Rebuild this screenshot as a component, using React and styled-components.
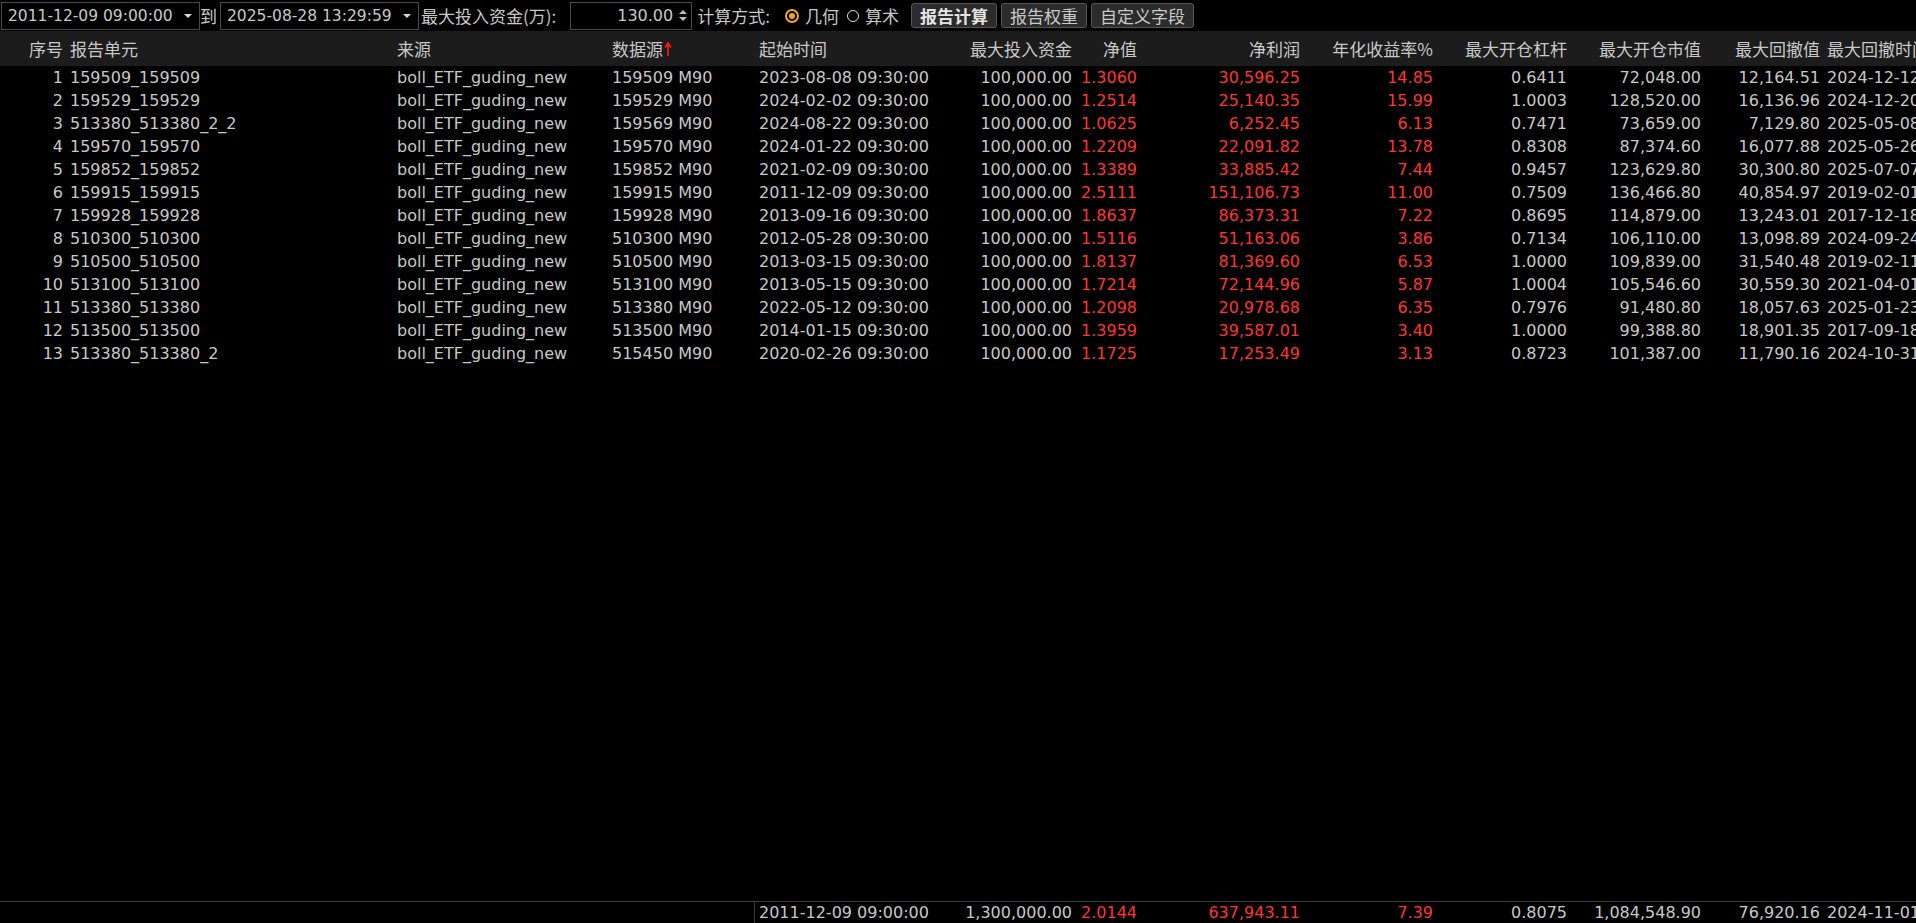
import React from "react";
import styled, { createGlobalStyle } from "styled-components";

const GlobalStyle = createGlobalStyle`
  html, body {
    margin: 0;
    padding: 0;
    background: #000;
    overflow: hidden;
  }
`;

const CJK = `"Noto Sans CJK SC", "Noto Sans", sans-serif`;
const LATIN = `"DejaVu Sans", "Noto Sans CJK SC", sans-serif`;
const TEXT = "#c8c8c8";
const RED = "#ff3434";
const LINE = "#3c3c3c";

// column widths in px, shared by header, rows and footer
const COLS = [66, 327, 215, 147, 185, 135, 65, 163, 133, 134, 134, 119, 170];
const GRID = COLS.map((w) => `${w}px`).join(" ");

const columns = [
  { title: "序号", align: "right" },
  { title: "报告单元", align: "left" },
  { title: "来源", align: "left" },
  { title: "数据源", align: "left", sorted: true },
  { title: "起始时间", align: "left" },
  { title: "最大投入资金", align: "right" },
  { title: "净值", align: "right", red: true },
  { title: "净利润", align: "right", red: true },
  { title: "年化收益率%", align: "right", red: true },
  { title: "最大开仓杠杆", align: "right" },
  { title: "最大开仓市值", align: "right" },
  { title: "最大回撤值", align: "right" },
  { title: "最大回撤时间", align: "left" },
];

const SRC = "boll_ETF_guding_new";
const records = [
  [1, "159509_159509", SRC, "159509 M90", "2023-08-08 09:30:00", "100,000.00", "1.3060", "30,596.25", "14.85", "0.6411", "72,048.00", "12,164.51", "2024-12-12 14:30:00"],
  [2, "159529_159529", SRC, "159529 M90", "2024-02-02 09:30:00", "100,000.00", "1.2514", "25,140.35", "15.99", "1.0003", "128,520.00", "16,136.96", "2024-12-20 14:30:00"],
  [3, "513380_513380_2_2", SRC, "159569 M90", "2024-08-22 09:30:00", "100,000.00", "1.0625", "6,252.45", "6.13", "0.7471", "73,659.00", "7,129.80", "2025-05-08 14:30:00"],
  [4, "159570_159570", SRC, "159570 M90", "2024-01-22 09:30:00", "100,000.00", "1.2209", "22,091.82", "13.78", "0.8308", "87,374.60", "16,077.88", "2025-05-26 14:30:00"],
  [5, "159852_159852", SRC, "159852 M90", "2021-02-09 09:30:00", "100,000.00", "1.3389", "33,885.42", "7.44", "0.9457", "123,629.80", "30,300.80", "2025-07-07 14:30:00"],
  [6, "159915_159915", SRC, "159915 M90", "2011-12-09 09:30:00", "100,000.00", "2.5111", "151,106.73", "11.00", "0.7509", "136,466.80", "40,854.97", "2019-02-01 14:30:00"],
  [7, "159928_159928", SRC, "159928 M90", "2013-09-16 09:30:00", "100,000.00", "1.8637", "86,373.31", "7.22", "0.8695", "114,879.00", "13,243.01", "2017-12-18 14:30:00"],
  [8, "510300_510300", SRC, "510300 M90", "2012-05-28 09:30:00", "100,000.00", "1.5116", "51,163.06", "3.86", "0.7134", "106,110.00", "13,098.89", "2024-09-24 14:30:00"],
  [9, "510500_510500", SRC, "510500 M90", "2013-03-15 09:30:00", "100,000.00", "1.8137", "81,369.60", "6.53", "1.0000", "109,839.00", "31,540.48", "2019-02-11 14:30:00"],
  [10, "513100_513100", SRC, "513100 M90", "2013-05-15 09:30:00", "100,000.00", "1.7214", "72,144.96", "5.87", "1.0004", "105,546.60", "30,559.30", "2021-04-01 14:30:00"],
  [11, "513380_513380", SRC, "513380 M90", "2022-05-12 09:30:00", "100,000.00", "1.2098", "20,978.68", "6.35", "0.7976", "91,480.80", "18,057.63", "2025-01-23 14:30:00"],
  [12, "513500_513500", SRC, "513500 M90", "2014-01-15 09:30:00", "100,000.00", "1.3959", "39,587.01", "3.40", "1.0000", "99,388.80", "18,901.35", "2017-09-18 14:30:00"],
  [13, "513380_513380_2", SRC, "515450 M90", "2020-02-26 09:30:00", "100,000.00", "1.1725", "17,253.49", "3.13", "0.8723", "101,387.00", "11,790.16", "2024-10-31 14:30:00"],
];

const totals = ["2011-12-09 09:00:00", "1,300,000.00", "2.0144", "637,943.11", "7.39", "0.8075", "1,084,548.90", "76,920.16", "2024-11-01 14:30:00"];

const Page = styled.div`
  display: flex;
  flex-direction: column;
  width: 100vw;
  height: 100vh;
  background: #000;
  overflow: hidden;
`;

const Toolbar = styled.div`
  display: flex;
  align-items: center;
  flex-shrink: 0;
  height: 31px;
  padding-left: 1px;
  box-sizing: border-box;
`;

const Select = styled.div`
  display: flex;
  align-items: center;
  justify-content: space-between;
  box-sizing: border-box;
  width: ${({ $w }) => $w}px;
  height: 28px;
  margin-left: ${({ $ml }) => $ml || 0}px;
  padding: 0 7px 0 6px;
  border: 1px solid #4c4c4c;
  color: ${TEXT};
  font: 15.5px ${LATIN};
`;

const Caret = styled.span`
  width: 0;
  height: 0;
  border-left: 4px solid transparent;
  border-right: 4px solid transparent;
  border-top: 4px solid #d8d8d8;
`;

const Label = styled.span`
  margin-left: ${({ $ml }) => $ml || 0}px;
  color: ${TEXT};
  font: 17px ${CJK};
  white-space: nowrap;
`;

const NumberBox = styled.div`
  display: flex;
  align-items: center;
  justify-content: flex-end;
  gap: 6px;
  box-sizing: border-box;
  width: 122px;
  height: 28px;
  margin-left: 14px;
  padding-right: 4px;
  border: 1px solid #4c4c4c;
  color: ${TEXT};
  font: 16px ${LATIN};
`;

const Spinner = styled.span`
  display: flex;
  flex-direction: column;
  gap: 3px;
`;

const SpinArrow = styled.span`
  width: 0;
  height: 0;
  border-left: 4px solid transparent;
  border-right: 4px solid transparent;
  ${({ $up }) => ($up ? "border-bottom: 4px solid #bcbcbc;" : "border-top: 4px solid #bcbcbc;")}
`;

const Radio = styled.span`
  display: flex;
  align-items: center;
  justify-content: center;
  box-sizing: border-box;
  width: ${({ $on }) => ($on ? 14 : 12)}px;
  height: ${({ $on }) => ($on ? 14 : 12)}px;
  margin-left: ${({ $ml }) => $ml || 0}px;
  margin-right: 6px;
  border-radius: 50%;
  border: ${({ $on }) => ($on ? "2px solid #f3a21d" : "1.5px solid #e0e0e0")};

  &::after {
    content: "";
    display: ${({ $on }) => ($on ? "block" : "none")};
    width: 6px;
    height: 6px;
    border-radius: 50%;
    background: #f3a21d;
  }
`;

const Button = styled.button`
  height: 25px;
  margin-left: ${({ $ml }) => $ml || 0}px;
  padding: 0 8px;
  border: 1px solid #565656;
  border-radius: 3px;
  background: #2b2b2b;
  color: ${({ $primary }) => ($primary ? "#e4e4e4" : TEXT)};
  font: ${({ $primary }) => ($primary ? 700 : 400)} 17px ${CJK};
  line-height: 23px;
  cursor: pointer;
`;

const Table = styled.div`
  display: flex;
  flex-direction: column;
  flex: 1;
  min-height: 0;
  overflow: hidden;
`;

const HeaderRow = styled.div`
  display: grid;
  grid-template-columns: ${GRID};
  flex-shrink: 0;
  height: 35px;
  align-items: center;
  background: #1c1c1c;
`;

const HeaderCell = styled.div`
  display: flex;
  align-items: center;
  justify-content: ${({ $align }) => ($align === "right" ? "flex-end" : "flex-start")};
  padding: ${({ $align }) => ($align === "right" ? "0 3px 0 0" : "0 0 0 4px")};
  color: ${TEXT};
  font: 17px ${CJK};
  white-space: nowrap;
  overflow: hidden;
`;

const SortArrow = styled.svg`
  width: 8px;
  height: 16px;
  margin-left: 1px;
`;

const Body = styled.div`
  flex: 1;
  min-height: 0;
  overflow: hidden;
`;

const Row = styled.div`
  display: grid;
  grid-template-columns: ${GRID};
  height: 23px;
  align-items: center;
`;

const Cell = styled.div`
  padding: ${({ $align }) => ($align === "right" ? "0 3px 0 0" : "0 0 0 4px")};
  text-align: ${({ $align }) => $align};
  color: ${({ $red }) => ($red ? RED : TEXT)};
  font: 16px ${LATIN};
  line-height: 23px;
  white-space: nowrap;
  overflow: hidden;
`;

const Footer = styled.div`
  display: grid;
  grid-template-columns: ${GRID};
  flex-shrink: 0;
  height: 22px;
  box-sizing: border-box;
  border-top: 1px solid ${LINE};
  align-items: center;
`;

const FooterBlank = styled.div`
  grid-column: 1 / span 4;
  height: 100%;
  border-right: 1px solid ${LINE};
`;

function DateSelect({ value, width, ml }) {
  return (
    <Select $w={width} $ml={ml}>
      <span>{value}</span>
      <Caret />
    </Select>
  );
}

export default function App() {
  return (
    <Page>
      <GlobalStyle />
      <Toolbar>
        <DateSelect value="2011-12-09 09:00:00" width={199} />
        <Label>到</Label>
        <DateSelect value="2025-08-28 13:29:59" width={199} ml={3} />
        <Label $ml={2}>最大投入资金(万):</Label>
        <NumberBox>
          <span>130.00</span>
          <Spinner>
            <SpinArrow $up />
            <SpinArrow />
          </Spinner>
        </NumberBox>
        <Label $ml={5}>计算方式:</Label>
        <Radio $on $ml={15} />
        <Label>几何</Label>
        <Radio $ml={8} />
        <Label>算术</Label>
        <Button $primary $ml={12}>报告计算</Button>
        <Button $ml={4}>报告权重</Button>
        <Button $ml={4}>自定义字段</Button>
      </Toolbar>

      <Table>
        <HeaderRow>
          {columns.map((col) => (
            <HeaderCell key={col.title} $align={col.align}>
              {col.title}
              {col.sorted && (
                <SortArrow viewBox="0 0 8 16">
                  <path d="M4 15V3M1 6.5L4 2l3 4.5" stroke="#ff1a1a" strokeWidth="1.6" fill="none" />
                </SortArrow>
              )}
            </HeaderCell>
          ))}
        </HeaderRow>

        <Body>
          {records.map((rec) => (
            <Row key={rec[0]}>
              {rec.map((value, i) => (
                <Cell key={i} $align={columns[i].align} $red={columns[i].red}>
                  {value}
                </Cell>
              ))}
            </Row>
          ))}
        </Body>

        <Footer>
          <FooterBlank />
          {totals.map((value, i) => (
            <Cell key={i} $align={columns[i + 4].align} $red={columns[i + 4].red}>
              {value}
            </Cell>
          ))}
        </Footer>
      </Table>
    </Page>
  );
}
